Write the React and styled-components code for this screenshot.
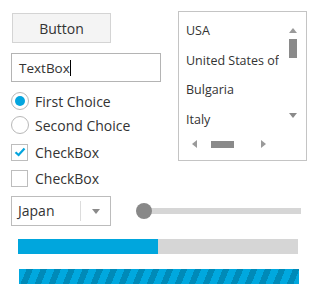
import React from 'react';
import styled, { createGlobalStyle } from 'styled-components';

const GlobalStyle = createGlobalStyle`
  body {
    margin: 0;
    background: #ffffff;
    font-family: 'Open Sans', 'Noto Sans', sans-serif;
    color: #333333;
  }
`;

const Page = styled.div`
  width: 320px;
  height: 300px;
  overflow: hidden;
`;

const Top = styled.div`
  display: flex;
  padding: 11px 0 0 11px;
`;

const LeftCol = styled.div`
  width: 151px;
  display: flex;
  flex-direction: column;
`;

const Button = styled.button`
  margin: 2px 0 0 1px;
  width: 99px;
  height: 30px;
  background: #f4f4f4;
  border: 1px solid #d4d4d4;
  font-family: inherit;
  font-size: 14px;
  color: #333;
  padding: 0;
`;

const TextBox = styled.div`
  margin-top: 10px;
  height: 27px;
  border: 1px solid #b4b4b4;
  display: flex;
  align-items: center;
  padding-left: 7px;
  box-sizing: content-box;
  width: 141px;
  font-size: 13.5px;

  &::after {
    content: '';
    width: 1px;
    height: 16px;
    background: #000;
  }
`;

const Choice = styled.div`
  display: flex;
  align-items: center;
  gap: ${p => p.gap || 6}px;
  height: ${p => p.h}px;
  margin-top: ${p => p.mt || 0}px;
  font-size: 14px;
`;

const Radio = styled.span`
  width: 16px;
  height: 16px;
  border-radius: 50%;
  border: 1px solid #b8b8b8;
  display: flex;
  align-items: center;
  justify-content: center;

  &::after {
    content: '';
    display: ${p => (p.checked ? 'block' : 'none')};
    width: 10px;
    height: 10px;
    border-radius: 50%;
    background: #04a5de;
  }
`;

const Check = styled.span`
  width: 15px;
  height: 15px;
  border: 1px solid #bdbdbd;
  display: flex;
  align-items: center;
  justify-content: center;
`;

const ListBox = styled.div`
  margin-left: 16px;
  width: 127px;
  height: 148px;
  border: 1px solid #c4c4c4;
  display: grid;
  grid-template-columns: 1fr 27px;
  grid-template-rows: 1fr 28px;
`;

const Items = styled.div`
  padding: 4px 0 0 7px;
  overflow: hidden;
  white-space: nowrap;
  font-size: 12.5px;
`;

const Item = styled.div`
  height: 29.5px;
  line-height: 29.5px;
`;

const VScroll = styled.div`
  display: flex;
  flex-direction: column;
  align-items: center;
  padding: 16px 0 14px 0;
  gap: 6px;
`;

const Thumb = styled.div`
  background: #8a8a8a;
  width: ${p => p.w}px;
  height: ${p => p.h}px;
  margin-left: ${p => p.ml || 0}px;
`;

const Tri = styled.span`
  width: 0;
  height: 0;
  border-style: solid;
  border-color: transparent;
  margin-left: ${p => p.ml || 0}px;
  ${p => p.dir === 'up' && 'border-width: 0 4px 5px 4px; border-bottom-color: #9a9a9a;'}
  ${p => p.dir === 'down' && 'border-width: 5px 4px 0 4px; border-top-color: #8a8a8a;'}
  ${p => p.dir === 'left' && 'border-width: 4px 5px 4px 0; border-right-color: #9a9a9a;'}
  ${p => p.dir === 'right' && 'border-width: 4px 0 4px 5px; border-left-color: #9a9a9a;'}
`;

const Spacer = styled.div`
  flex: 1;
`;

const HScroll = styled.div`
  display: flex;
  align-items: center;
  padding: 0 0 4px 13px;
`;

const Bottom = styled.div`
  padding: 5px 0 0 11px;
  display: flex;
  flex-direction: column;
`;

const Row = styled.div`
  display: flex;
  align-items: center;
`;

const Dropdown = styled.div`
  width: 98px;
  height: 28px;
  border: 1px solid #bcbcbc;
  display: flex;
  align-items: center;
  font-size: 14px;
`;

const DropText = styled.span`
  flex: 1;
  padding-left: 6px;
  border-right: 1px solid #dcdcdc;
  height: 20px;
  line-height: 20px;
`;

const DropArrow = styled.span`
  width: 29px;
  display: flex;
  justify-content: center;
`;

const Slider = styled.div`
  margin-left: 25px;
  width: 165px;
  height: 16px;
  display: flex;
  align-items: center;
  position: relative;
`;

const Track = styled.div`
  flex: 1;
  margin-left: 8px;
  height: 6px;
  background: #d6d6d6;
`;

const Knob = styled.span`
  position: absolute;
  left: 0;
  top: 0;
  width: 16px;
  height: 16px;
  border-radius: 50%;
  background: #888888;
`;

const Progress = styled.div`
  margin: 13px 0 0 7px;
  width: 280px;
  height: 15px;
  background: #d6d6d6;
`;

const Fill = styled.div`
  height: 100%;
  background: #00a6dd;
`;

const Striped = styled.div`
  margin: 15px 0 0 8px;
  width: 280px;
  height: 15px;
  background: repeating-linear-gradient(
    112deg,
    #00a8df 0px,
    #00a8df 7px,
    #008ab8 7px,
    #008ab8 13px
  );
`;

const CheckMark = () => (
  <svg width="12" height="10" viewBox="0 0 12 10">
    <path d="M1.5 5.2 L4.6 8 L10.5 1.5" fill="none" stroke="#04a5de" strokeWidth="2.2" />
  </svg>
);

const countries = ['USA', 'United States of America', 'Bulgaria', 'Italy'];

export default function App() {
  return (
    <Page>
      <GlobalStyle />
      <Top>
        <LeftCol>
          <Button>Button</Button>
          <TextBox>TextBox</TextBox>
          <Choice h={24} mt={7}>
            <Radio checked />
            First Choice
          </Choice>
          <Choice h={24}>
            <Radio />
            Second Choice
          </Choice>
          <Choice h={26} mt={2} gap={7}>
            <Check>
              <CheckMark />
            </Check>
            CheckBox
          </Choice>
          <Choice h={26} gap={7}>
            <Check />
            CheckBox
          </Choice>
        </LeftCol>
        <ListBox>
          <Items>
            {countries.map(c => (
              <Item key={c}>{c}</Item>
            ))}
          </Items>
          <VScroll>
            <Tri dir="up" />
            <Thumb w={8} h={19} />
            <Spacer />
            <Tri dir="down" />
          </VScroll>
          <HScroll>
            <Tri dir="left" />
            <Thumb w={23} h={7} ml={14} />
            <Tri dir="right" ml={27} />
          </HScroll>
        </ListBox>
      </Top>
      <Bottom>
        <Row>
          <Dropdown>
            <DropText>Japan</DropText>
            <DropArrow>
              <Tri dir="down" />
            </DropArrow>
          </Dropdown>
          <Slider>
            <Track />
            <Knob />
          </Slider>
        </Row>
        <Progress>
          <Fill style={{ width: '50%' }} />
        </Progress>
        <Striped />
      </Bottom>
    </Page>
  );
}
